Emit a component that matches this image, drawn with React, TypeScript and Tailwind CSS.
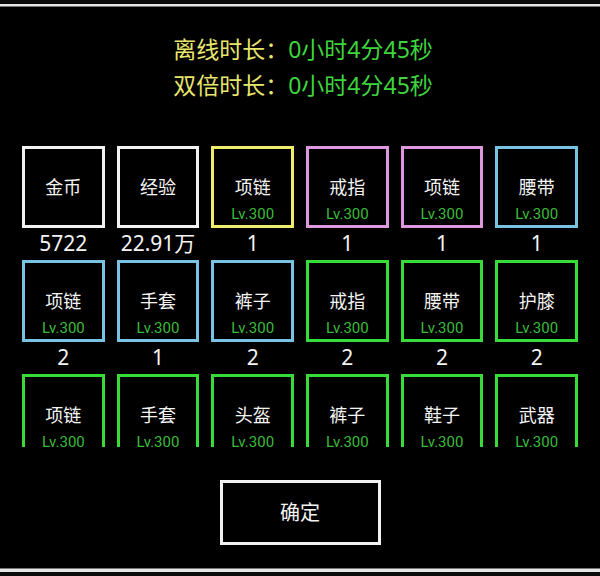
import React from "react";

type Item = { name: string; color: string; count?: string; lv: boolean };

const border: Record<string, string> = {
  white: "border-[#f2f2f2]",
  yellow: "border-[#eeee6a]",
  pink: "border-[#de98de]",
  blue: "border-[#78c2e2]",
  green: "border-[#38dc38]",
};

const rows: Item[][] = [
  [
    { name: "金币", color: "white", count: "5722", lv: false },
    { name: "经验", color: "white", count: "22.91万", lv: false },
    { name: "项链", color: "yellow", count: "1", lv: true },
    { name: "戒指", color: "pink", count: "1", lv: true },
    { name: "项链", color: "pink", count: "1", lv: true },
    { name: "腰带", color: "blue", count: "1", lv: true },
  ],
  [
    { name: "项链", color: "blue", count: "2", lv: true },
    { name: "手套", color: "blue", count: "1", lv: true },
    { name: "裤子", color: "blue", count: "2", lv: true },
    { name: "戒指", color: "green", count: "2", lv: true },
    { name: "腰带", color: "green", count: "2", lv: true },
    { name: "护膝", color: "green", count: "2", lv: true },
  ],
  [
    { name: "项链", color: "green", lv: true },
    { name: "手套", color: "green", lv: true },
    { name: "头盔", color: "green", lv: true },
    { name: "裤子", color: "green", lv: true },
    { name: "鞋子", color: "green", lv: true },
    { name: "武器", color: "green", lv: true },
  ],
];

function Cell({ item }: { item: Item }) {
  return (
    <div className="flex flex-col">
      <div
        className={`h-[82px] border-[3px] ${border[item.color]} flex flex-col items-center pt-[26px]`}
      >
        <div className="text-[18px] leading-[24px] text-[#f4f4f4]">{item.name}</div>
        {item.lv && (
          <div
            className="mt-[6px] text-[15px] leading-[18px] text-[#3bbb3b]"
            style={{ fontFamily: 'Roboto, "Noto Sans", sans-serif' }}
          >
            Lv.300
          </div>
        )}
      </div>
      <div className="h-[32px] flex items-center justify-center text-[21px] text-[#f4f4f4]">
        {item.count}
      </div>
    </div>
  );
}

export default function App() {
  return (
    <div
      className="w-[600px] h-[576px] bg-black flex flex-col overflow-hidden"
      style={{ fontFamily: '"Noto Sans", "Noto Sans CJK SC", sans-serif' }}
    >
      <div className="h-[4px] bg-[#0a0a0a]" />
      <div className="h-[2px] bg-[#e6e6e6]" />
      <div className="h-[1px] bg-[#777]" />
      <div className="pt-[24px] flex flex-col items-center text-[23px] leading-[36px]">
        <div className="pl-[6px]">
          <span className="text-[#e8e66c]">离线时长：</span>
          <span className="text-[#3ed43e]">0小时4分45秒</span>
        </div>
        <div className="pl-[6px]">
          <span className="text-[#e8e66c]">双倍时长：</span>
          <span className="text-[#3ed43e]">0小时4分45秒</span>
        </div>
      </div>
      <div className="h-[344px] overflow-hidden pt-[43px] px-[22px]">
        <div className="grid grid-cols-6 gap-x-[12px]">
          {rows.flat().map((it, i) => (
            <Cell key={i} item={it} />
          ))}
        </div>
      </div>
      <div className="flex justify-center pt-[33px]">
        <div className="w-[161px] h-[65px] border-[3px] border-[#f2f2f2] flex items-center justify-center text-[20px] text-[#f4f4f4]">
          确定
        </div>
      </div>
      <div className="flex-1" />
      <div className="h-[1px] bg-[#777]" />
      <div className="h-[3px] bg-[#e6e6e6]" />
      <div className="h-[4px] bg-[#0a0a0a]" />
    </div>
  );
}
